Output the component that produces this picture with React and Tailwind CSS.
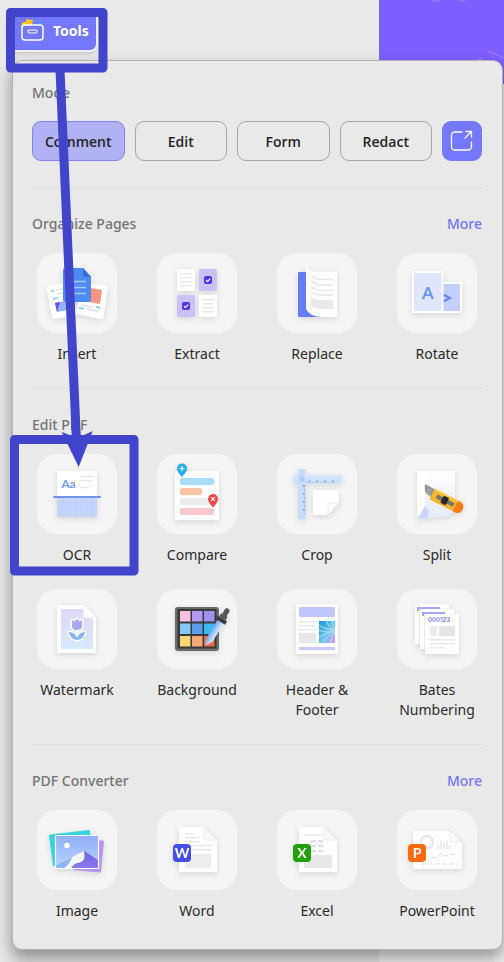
import React from 'react';

const Lines = ({ x, w, ys, color = '#e9e9ec' }) =>
  ys.map((y) => <rect key={y} x={x} y={y} width={w} height="1.6" rx="0.8" fill={color} />);

const InsertIcon = () => (
  <>
    <path d="M10.500 33 34 29l6 33-23 4q-1.500 0-2-1.500L9.500 35q-.3-1.600 1-2Z" fill="#fff" />
    <path d="M45 29l25 4q1.500.5 1.200 2l-5 30q-.5 1.500-2 1.300L39 61Z" fill="#fff" />
    <path d="m18 50 11-2 2 9-11 2Z" fill="#8fb4ff" />
    <path d="m18 50 5-1-3 10Z" fill="#6b4df0" />
    <path d="m54 35 11 2-2 14-11-2Z" fill="#ff9580" />
    <path d="m14 38 3-.5M16 46l5-1" stroke="#8fdcf5" strokeWidth="2" />
    <path d="m19 37 8-1.500M20 41l8-1.500" stroke="#e3e3e8" strokeWidth="1.400" />
    <path d="m42 55 5 .8M59 54l4 .7" stroke="#8fcdfa" strokeWidth="2" />
    <path d="m50 56 11 2M44 52l11 2" stroke="#dfe1e8" strokeWidth="1.400" />
    <path d="M28 15h18l8 9v23q0 2-2 2H28q-2 0-2-2V17q0-2 2-2Z" fill="#4d8bf2" />
    <path d="M46 15l8 9h-6q-2 0-2-2Z" fill="#2f6fe0" />
    <path d="M32 28.500h17M32 34.500h17M32 40.500h17" stroke="#a9c8ff" strokeWidth="1.700" />
  </>
);

const ExtractIcon = () => (
  <>
    {[[20, 16], [42, 42]].map(([x, y]) => (
      <g key={x}>
        <rect x={x} y={y} width="18" height="22" rx="1.500" fill="#fff" />
        <Lines x={x + 3} w={12} ys={[y + 4, y + 8, y + 12, y + 16]} />
      </g>
    ))}
    {[[42, 16], [20, 42]].map(([x, y]) => (
      <g key={x}>
        <rect x={x} y={y} width="18" height="22" rx="1.500" fill="#cbc1ff" />
        <rect x={x + 5} y={y + 7} width="8" height="8" rx="2" fill="#5233e6" />
        <path d={`M${x + 7} ${y + 11}l1.500 1.600 2.700-3`} fill="none" stroke="#fff" strokeWidth="1.300" />
      </g>
    ))}
  </>
);

const ReplaceIcon = () => (
  <>
    <path d="M22 19h10v37l12 8H22q-1 0-1-1V20q0-1 1-1Z" fill="#647df5" />
    <path d="M29.500 11.500Q31 18 38 19h22v44q0 1-1 1H44Q32 63 29 56V13q0-1 .5-1.500Z" fill="#fff" />
    <path d="M34 22q4 4.500 10 4.500h12M34 27.500q4 4.500 10 4.500h12M34 33q4 4.500 10 4.500h12M34 38.500q4 3.500 10 3.500h12" fill="none" stroke="#e6e6ea" strokeWidth="1.500" />
    <path d="M34 44q4 3 10 3h12v9H44q-6 0-10-3Z" fill="#e9e9ec" />
  </>
);

const RotateIcon = () => (
  <>
    <rect x="40" y="29" width="25" height="31" rx="1" fill="#fff" />
    <rect x="40" y="31" width="23" height="27" fill="#c3d0ff" />
    <path d="M46 41.500l7 3.500-7 3.500" fill="none" stroke="#6388f2" strokeWidth="2" />
    <rect x="15" y="18" width="31.500" height="42" rx="1" fill="#fff" />
    <rect x="17" y="20" width="27.500" height="38" fill="#e0e5ff" />
    <text x="31" y="46" fontSize="17" fontWeight="700" textAnchor="middle" fill="#6b93f7" fontFamily="Lato, sans-serif">A</text>
  </>
);

const OcrIcon = () => (
  <>
    <rect x="20" y="17" width="40" height="26" rx="1" fill="#fff" />
    <text x="24.500" y="34" fontSize="12" fontWeight="700" fill="#7297ee" fontFamily="Lato, sans-serif">Aa</text>
    <path d="M43 22.500h14M43 26.500h12M43 33.500h9" stroke="#e5e7ec" strokeWidth="1.500" />
    <rect x="20" y="44" width="40" height="19" rx="1" fill="#c3d5fb" />
    <path d="M25 44v19M30 44v19M35 44v19M40 44v19M45 44v19M50 44v19M55 44v19M20 48.500h40M20 53h40M20 57.500h40" stroke="#bccffa" strokeWidth="0.600" />
    <rect x="16" y="42" width="48" height="2" rx="1" fill="#6f93e8" />
  </>
);

const Pin = ({ x, y, color, children }) => (
  <g transform={`translate(${x} ${y})`}>
    <path d="M-5 0a5 5 0 1 1 10 0Q5 3 0 8.500-5 3-5 0Z" fill={color} />
    <g stroke="#fff" strokeWidth="1.200">{children}</g>
  </g>
);

const CompareIcon = () => (
  <>
    <rect x="18" y="17" width="44" height="49" rx="1" fill="#fff" />
    <rect x="23" y="24" width="34" height="7" rx="2" fill="#a8ddff" />
    <rect x="23" y="34" width="22" height="7" rx="2" fill="#ffc4a4" />
    <rect x="23" y="44" width="34" height="7" rx="2" fill="#ececee" />
    <rect x="23" y="54" width="34" height="7" rx="2" fill="#ffc8ca" />
    <Pin x={25} y={14.500} color="#22adf7"><path d="M-2.500 0h5M0-2.500v5" /></Pin>
    <Pin x={56} y={45} color="#f0484c"><path d="m-1.800-1.800 3.600 3.600M1.800-1.800l-3.600 3.600" /></Pin>
  </>
);

const CropIcon = () => (
  <>
    <rect x="16" y="22" width="49" height="7.500" fill="#cfe2ff" />
    <path d="M16 21h49" stroke="#d9e8ff" />
    <rect x="21" y="15" width="7.500" height="50" fill="#c7ddff" />
    <path d="M40 26.500v2M48 26.500v2M56 26.500v2M32.500 26.500v2" stroke="#6e98e8" strokeWidth="1.500" />
    <path d="M30 29v-1.500M35 29v-1.500M37 29v-1.500M43 29v-1.500M45 29v-1.500M51 29v-1.500M53 29v-1.500M60 29v-1.500" stroke="#86abf0" strokeWidth="0.700" />
    <path d="M26 32h2M26 40h2M26 48h2M26 56h2" stroke="#6e98e8" strokeWidth="1.500" />
    <path d="M27 35h1.500M27 37h1.500M27 43h1.500M27 45h1.500M27 51h1.500M27 53h1.500M27 60h1.500" stroke="#86abf0" strokeWidth="0.700" />
    <circle cx="25" cy="25" r="2.500" fill="#adc9f8" />
    <path d="M38 36h24v13L51 61H37q-1 0-1-1V37q0-1 1-1Z" fill="#fff" />
    <path d="M62 49H53q-2 0-2 2v10Z" fill="#fff" stroke="#e4e5e9" strokeWidth="0.800" />
  </>
);

const SplitIcon = () => (
  <>
    <defs><linearGradient id="cut" x1="0" y1="0" x2="0" y2="1"><stop stopColor="#fff" /><stop offset="1" stopColor="#e4ebfd" /></linearGradient></defs>
    <path d="M20 17h38v39l-6 6-22 2H20Z" fill="url(#cut)" />
    <path d="M20 17h12q2 12-2 24l-3 12-5 11h-2Z" fill="#fff" />
    <path d="M20 64q5-5 8-12l4 5-2 7Z" fill="#c9d5f8" />
    <path d="M28 30 39 36 35 44 30 40q-3-2-2-10Z" fill="#969696" />
    <path d="m31 34 3 3M30 37l4 5" stroke="#c5c5c5" strokeWidth="0.800" />
    <g transform="translate(37 41) rotate(27)">
      <path d="M-2-6H27q5 1 5 6t-5 6H-2Z" fill="#f9b52c" />
      <path d="M24-6h3q5 1 5 6t-5 6h-3Z" fill="#ff7a14" />
      <path d="M-2-6H25v2H-2Z" fill="#ffcc4a" />
      <rect x="3" y="-2" width="19" height="4" fill="#76736c" />
      <rect x="9" y="-4" width="6" height="8" rx="1" fill="#292827" />
    </g>
  </>
);

const WatermarkIcon = () => (
  <>
    <defs>
      <linearGradient id="wm" x1="0" y1="0" x2="0" y2="1"><stop stopColor="#dfd8fb" /><stop offset="1" stopColor="#d5e9ff" /></linearGradient>
      <linearGradient id="tulip" x1="0" y1="0" x2="0" y2="1"><stop stopColor="#b7a5f2" /><stop offset="1" stopColor="#7db8f5" /></linearGradient>
    </defs>
    <path d="M21 16h26l12 12v35q0 1-1 1H21q-1 0-1-1V17q0-1 1-1Z" fill="#fff" />
    <path d="M24 20h22v8q0 1 1 1h9v31H24Z" fill="url(#wm)" />
    <path d="M47 16l12 12H49q-2 0-2-2Z" fill="#fff" stroke="#eceaf5" strokeWidth="0.700" />
    <path d="M35 31l2 1.500 3-2.500 3 2.500 2-1.500v7q-1 3-5 3t-5-3ZM32 43q6 0 8 6 2-6 8-6-1 7-8 8-7-1-8-8Z" fill="url(#tulip)" stroke="#fff" strokeWidth="3" strokeLinejoin="round" paintOrder="stroke" />
    <path d="M40 41v6" stroke="#fff" strokeWidth="1.500" />
  </>
);

const swatches = ['#f9bfe0', '#b49af2', '#9c93ef', '#82caf5', '#5b9df0', '#35bdf2', '#fbd773', '#f5a978', '#f0673b'];
const BackgroundIcon = () => (
  <>
    <defs><linearGradient id="dropper"><stop stopColor="#72a6f3" /><stop offset="1" stopColor="#d7ecff" /></linearGradient></defs>
    <rect x="18" y="18" width="44" height="44" rx="3" fill="#6b6b6c" />
    <rect x="20.500" y="20" width="39" height="39.500" fill="#39393a" />
    {swatches.map((c, i) => <rect key={c} x={23 + (i % 3) * 12} y={22 + Math.floor(i / 3) * 12.500} width="10.500" height="10.500" fill={c} />)}
    <g transform="translate(50 54) rotate(31)">
      <path d="M-3-4V-25H4V-4L1 2H-1Z" fill="url(#dropper)" />
      <path d="M-5-29H6v4H-5Z" fill="#3d3d40" />
      <path d="M-3-29q-1-4 1-4v-6q2.500-3 5 0v6q2 0 1 4Z" fill="#55555a" />
    </g>
  </>
);

const HeaderIcon = () => (
  <>
    <defs><linearGradient id="photo" x1="0" y1="0" x2="1" y2="1"><stop stopColor="#1594d8" /><stop offset=".5" stopColor="#62c4ef" /><stop offset="1" stopColor="#dc9bea" /></linearGradient></defs>
    <rect x="19" y="15" width="42" height="50" rx="1.500" fill="#fff" />
    <rect x="22" y="18" width="36" height="10" rx="1" fill="#c0c5fc" />
    <Lines x={22} w={17} ys={[32, 36, 40]} />
    <rect x="22" y="44" width="17" height="10" fill="#e8e8ea" />
    <rect x="42" y="32" width="16" height="22" fill="url(#photo)" />
    <path d="M58 40Q50 42 42 36M58 41q-9 4-16 0M58 42q-10 2-16 6M58 43q-8 3-12 11M58 44q-4 4-5 10M57 41q-6-3-7-9M58 40q-3-4-3-8" fill="none" stroke="#b5e5fb" strokeWidth="0.900" />
    <rect x="22" y="58" width="36" height="3" fill="#c7caff" />
  </>
);

const BatesIcon = () => (
  <>
    <rect x="18" y="15" width="34" height="40" rx="1" fill="#fff" />
    <path d="M21 22v-3h22" fill="none" stroke="#a5a8f0" strokeWidth="2" />
    <path d="M22.500 20v35" stroke="#e8e8ec" />
    <rect x="23" y="20" width="34" height="40" rx="1" fill="#fff" />
    <path d="M26 27v-3h22" fill="none" stroke="#a5a8f0" strokeWidth="2" />
    <path d="M27.500 25v35" stroke="#e8e8ec" />
    <rect x="28" y="25" width="34" height="40" rx="1" fill="#fff" />
    <text x="31" y="33" fontSize="6" fontWeight="700" fill="#7f86e8" fontFamily="Inter, sans-serif">000123</text>
    <rect x="33" y="37" width="7" height="10" fill="#ececee" />
    <rect x="42" y="37" width="16" height="10" fill="#e6e6e8" />
    <Lines x={32} w={26} ys={[50, 54]} />
    <Lines x={32} w={15} ys={[58]} />
  </>
);

const ImageIcon = () => (
  <>
    <defs>
      <linearGradient id="sky" x1="0" y1="0" x2="0" y2="1"><stop stopColor="#91adf8" /><stop offset="1" stopColor="#b8d6ff" /></linearGradient>
      <linearGradient id="dune" x1="0" y1="0" x2="0" y2="1"><stop stopColor="#6c65dc" /><stop offset="1" stopColor="#8c79ee" /></linearGradient>
    </defs>
    <path d="m13 24.500 39-4.500q1 0 1 1l3 32-39 3q-1 0-1-1L12 26q0-1 1-1.500Z" fill="#38d3dc" />
    <path d="m60 30 6 .5q1 .2 1 1.500l-3 29q-.2 1.500-1.500 1.500L36 60Z" fill="#b694f2" />
    <rect x="18.500" y="25.500" width="43" height="33" rx="0.500" fill="url(#sky)" />
    <circle cx="30" cy="35.500" r="2.700" fill="#fff" />
    <path d="m19 55 28-14 5 9-14 8H19Z" fill="#f4f8ff" />
    <path d="m19 55 16-8q-2 7-8 11h-8Z" fill="#8fb6f5" />
    <path d="M47 41 61 50v8.500H34q3-6 9-6 6-1 4-11.500Z" fill="url(#dune)" />
    <rect x="18.500" y="25.500" width="43" height="33" rx="0.500" fill="none" stroke="#fff" strokeWidth="1.200" />
  </>
);

const Badge = ({ x, color, letter }) => (
  <>
    <rect x={x} y="34" width="18" height="18" rx="4" fill={color} />
    <text x={x + 9} y="48" fontSize="14" fontWeight="700" textAnchor="middle" fill="#fff" fontFamily="Lato, sans-serif">{letter}</text>
  </>
);

const Sheet = () => (
  <>
    <path d="M23 17h24l13 13v31q0 1-1 1H23q-1 0-1-1V18q0-1 1-1Z" fill="#fff" />
    <path d="M47 17l13 13H49q-2 0-2-2Z" fill="#fafafa" stroke="#e6e6e8" strokeWidth="0.800" />
  </>
);

const WordIcon = () => (
  <>
    <Sheet />
    <Lines x={28} w={10} ys={[23]} />
    <Lines x={28} w={15} ys={[27, 31]} />
    <Lines x={28} w={27} ys={[35, 39]} />
    <rect x="28" y="44" width="26" height="14" fill="#ededee" />
    <Badge x={16} color="#484de6" letter="W" />
  </>
);

const ExcelIcon = () => (
  <>
    <Sheet />
    <Lines x={27} w={20} ys={[24]} />
    <path d="M34 31h12M34 36h12M34 41h12" stroke="#dedee1" strokeWidth="2" strokeDasharray="5 2" />
    <rect x="27" y="45" width="28" height="13" fill="#e8e8ea" />
    <Badge x={16} color="#219f08" letter="X" />
  </>
);

const PowerPointIcon = () => (
  <>
    <path d="M17 21h36l12 11v26q0 1-1 1H17q-1 0-1-1V22q0-1 1-1Z" fill="#fff" />
    <path d="M53 21l12 11H55q-2 0-2-2Z" fill="#fafafa" stroke="#e6e6e8" strokeWidth="0.800" />
    <circle cx="30" cy="32" r="6" fill="none" stroke="#e7e7e9" strokeWidth="2.500" />
    <path d="M41 39v-4M44 39v-8M47 39v-6M50 39v-9M53 39v-4" stroke="#e7e7e9" strokeWidth="1.500" />
    <path d="m34 48 6-1 4-3 4 2 6-2 5 1M24 54h36" fill="none" stroke="#dedee1" strokeWidth="1" strokeDasharray="5 2" />
    <Badge x={11} color="#fb6a10" letter="P" />
  </>
);

const sections = [
  { title: 'Organize Pages', more: true, items: [['Insert', InsertIcon], ['Extract', ExtractIcon], ['Replace', ReplaceIcon], ['Rotate', RotateIcon]] },
  {
    title: 'Edit PDF',
    items: [
      ['OCR', OcrIcon], ['Compare', CompareIcon], ['Crop', CropIcon], ['Split', SplitIcon],
      ['Watermark', WatermarkIcon], ['Background', BackgroundIcon], ['Header & Footer', HeaderIcon], ['Bates Numbering', BatesIcon],
    ],
  },
  { title: 'PDF Converter', more: true, items: [['Image', ImageIcon], ['Word', WordIcon], ['Excel', ExcelIcon], ['PowerPoint', PowerPointIcon]] },
];

function Tool({ label, Icon }) {
  return (
    <button className="flex flex-col items-center gap-[11px] text-sm leading-5 text-[#292929]">
      <span className="size-20 rounded-[20px] bg-[#f5f5f5]">
        <svg viewBox="0 0 80 80" className="size-20 drop-shadow-[0_2px_3px_rgba(0,0,0,0.12)]" aria-hidden="true"><Icon /></svg>
      </span>
      <span className="w-20 text-center">{label}</span>
    </button>
  );
}

function Section({ title, more, items }) {
  return (
    <section className="border-t border-[#dedede] pt-[26px] pb-6">
      <div className="mb-[19px] flex items-center justify-between text-sm leading-5 font-medium">
        <h2 className="text-[#737373]">{title}</h2>
        {more && <a href="#more" className="text-[#7375fa]">More</a>}
      </div>
      <div className="-mx-[15px] grid grid-cols-4 gap-y-6">
        {items.map(([label, Icon]) => <Tool key={label} label={label} Icon={Icon} />)}
      </div>
    </section>
  );
}

export default function App() {
  return (
    <div className="relative overflow-hidden bg-[#e9e9e9] pb-3 font-['Noto_Sans','Open_Sans',sans-serif]">
      <div className="absolute inset-y-0 right-0 w-[125px] bg-[#f6f5f8]">
        <div className="relative h-[84px] overflow-hidden bg-[#7f5eff]">
          <svg className="absolute top-0 right-0 h-[84px] w-[125px]" viewBox="0 0 125 84" fill="none" stroke="#9479ff" strokeWidth="1.500" aria-hidden="true">
            <path d="M53 0q4 2 8 0M80 0q4 2 7-1M109 51l16 7M98 60l6-2" />
          </svg>
        </div>
      </div>
      <header className="relative flex h-[60px] items-start pt-[10px] pl-2">
        <button className="flex h-10 w-[88px] items-center gap-2 rounded-md bg-[#7477ff] pt-0.5 pl-[13px] text-sm font-bold text-white shadow-[0_0_0_2px_#f0f0f0,0_3px_5px_rgba(0,0,0,0.2)]">
          <svg width="24" height="24" viewBox="0 0 24 24" fill="none" aria-hidden="true">
            <path d="m6-2 2 3 4-.5-1 5 1 3-5 1-4-2-3 1 1-5 4-1Z" fill="#ffc41f" />
            <path d="m14 8 5-5 3 3v3h-8Z" fill="#29b4f5" />
            <path d="m15-2 2-2 2 2-2 3Z" fill="#20b898" />
            <rect x="1" y="6" width="21" height="15" rx="3" fill="#7477ff" stroke="#fff" strokeWidth="1.500" />
            <rect x="7" y="11" width="9" height="3" rx="1.500" stroke="#fff" strokeWidth="1.200" />
          </svg>
          Tools
        </button>
      </header>
      <main className="relative mr-px ml-3 rounded-[10px] border border-[#b2b2b2] bg-[#e9e9e9] pt-[22px] pr-5 pb-1 pl-[19px] shadow-[0_9px_16px_1px_rgba(0,0,0,0.36)]">
        <h2 className="mb-[18px] text-sm leading-5 font-medium text-[#737373]">Mode</h2>
        <div className="mb-[26px] flex gap-[10px]">
          {['Comment', 'Edit', 'Form', 'Redact'].map((mode) => (
            <button key={mode} aria-pressed={mode === 'Comment'} className={`h-10 flex-1 basis-0 rounded-[9px] border pt-0.5 font-['Open_Sans','Noto_Sans',sans-serif] text-sm font-semibold text-[#242424] ${mode === 'Comment' ? 'border-[#8183f8] bg-[#b0b2f5]' : 'border-[#a6a6a6]'}`}>
              {mode}
            </button>
          ))}
          <button aria-label="Open in new window" className="flex size-10 items-center justify-center rounded-[9px] bg-[#7477ff]">
            <svg width="24" height="24" viewBox="0 0 24 24" fill="none" stroke="#fff" strokeWidth="1.300" strokeLinecap="round" strokeLinejoin="round" aria-hidden="true">
              <path d="M12 3H5q-3.500 0-3.500 3.500v11Q1.500 21 5 21h13q3.500 0 3.500-3.500V13M16 2.500h5.500V8M21 3l-6 6" />
            </svg>
          </button>
        </div>
        {sections.map((s) => <Section key={s.title} {...s} />)}
      </main>
      <svg className="pointer-events-none absolute top-0 left-0" width="140" height="580" viewBox="0 0 140 580" fill="none" aria-hidden="true">
        <g stroke="#4045cc" strokeWidth="9" strokeLinejoin="round">
          <rect x="10.500" y="12.500" width="92.500" height="55.500" />
          <rect x="14.500" y="439.500" width="119.500" height="131.500" />
          <path d="m60 70 16.500 372" />
        </g>
        <path d="m78.700 467-17-35 10.300 4h10l10.700-5Z" fill="#4045cc" />
      </svg>
    </div>
  );
}
